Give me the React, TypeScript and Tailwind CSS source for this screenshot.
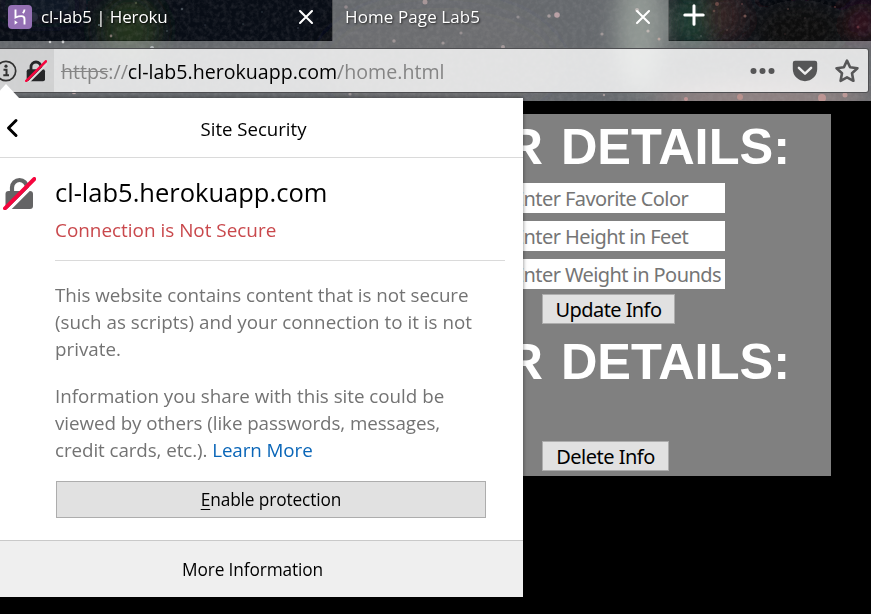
import React from "react";

const STARS: [number, number, number, string][] = [
  [33, 17, 5, "#303448"], [50, 42, 1.3, "#ffffff"], [63, 42, 1.4, "#ffffff"], [99, 25, 1, "#8aa0a8"],
  [111, 36, 1.4, "#b09a98"], [108, 17, 0.9, "#59604f"], [136, 3, 1.2, "#5c664b"], [182, 9, 1.3, "#65707a"],
  [167, 31, 0.8, "#7a8690"], [205, 25, 0.7, "#4b5560"], [74, 92, 2.2, "#e6c9c4"], [152, 48, 2, "#d9dde0"],
  [243, 24, 0.7, "#55606a"], [262, 12, 0.8, "#4f5862"], [298, 28, 1, "#3c4450"], [425, 2, 2.5, "#c7adad"],
  [346, 7, 1.8, "#a99a9d"], [394, 41, 1.7, "#b9a9a9"], [443, 43, 1.6, "#b5a9a9"], [461, 33, 1.6, "#aaa0a2"],
  [518, 17, 1.6, "#a8a0a2"], [549, 16, 1.8, "#c4b4b4"], [557, 15, 2.8, "#e2bcc0"], [503, 47, 2, "#c2b0b0"],
  [602, 34, 1.6, "#b9aaa9"], [350, 94, 1.6, "#b7a9a9"], [637, 10, 2, "#d8cdca"], [648, 31, 1.6, "#d9c9c4"],
  [717, 4, 2, "#8a5d57"], [714, 11, 1.3, "#755450"], [745, 16, 1.6, "#9a7068"],
  [742, 4, 1, "#6b4b47"], [788, 9, 1, "#604643"], [805, 18, 0.8, "#553f3f"], [835, 7, 1, "#71484c"],
  [858, 27, 1.5, "#7c444d"], [785, 34, 0.8, "#513c3c"], [727, 30, 1, "#5e4743"], [701, 36, 1, "#53615a"],
  [659, 39, 1.5, "#d6b7ae"], [686, 99, 2, "#dd9f9f"], [740, 97, 3, "#d09a94"], [822, 98, 4, "#d8a19e"],
  [845, 95, 2.5, "#d8a8a4"], [604, 95, 1.2, "#c6b2b0"],
];

function Starfield() {
  return (
    <svg className="absolute inset-0" width="871" height="101" viewBox="0 0 871 101" aria-hidden="true">
      <defs>
        <filter id="grain" x="0" y="0" width="100%" height="100%">
          <feTurbulence type="fractalNoise" baseFrequency="0.22" numOctaves="3" seed="4" />
          <feColorMatrix values="0 0 0 0 .55  0 0 0 0 .5  0 0 0 0 .5  1.2 0 0 0 -.46" />
        </filter>
        <filter id="soft" x="-50%" y="-50%" width="200%" height="200%"><feGaussianBlur stdDeviation="11" /></filter>
        <filter id="dot" x="-50%" y="-50%" width="200%" height="200%"><feGaussianBlur stdDeviation=".7" /></filter>
      </defs>
      <rect width="871" height="101" fill="#080d16" />
      <g filter="url(#soft)">
        <ellipse cx="130" cy="30" rx="30" ry="34" fill="#24301f" />
        <ellipse cx="40" cy="5" rx="50" ry="12" fill="#131b2a" />
        <ellipse cx="440" cy="60" rx="120" ry="60" fill="#12141a" />
        <ellipse cx="640" cy="30" rx="24" ry="60" fill="#66736a" />
        <ellipse cx="693" cy="20" rx="22" ry="30" fill="#1d3d32" />
        <ellipse cx="725" cy="15" rx="20" ry="30" fill="#302420" />
        <ellipse cx="800" cy="30" rx="50" ry="30" fill="#100c0d" />
        <ellipse cx="864" cy="22" rx="10" ry="20" fill="#4a1524" />
        <ellipse cx="760" cy="98" rx="110" ry="16" fill="#6c4949" />
      </g>
      <rect width="871" height="101" filter="url(#grain)" opacity=".22" />
      <path d="M332 0H669V41H871V101H0V41H332Z" fill="#b4b6b7" fillOpacity=".55" />
      <path d="M0 40.5H332.500V0M668.500 0V40.500H871" fill="none" stroke="#000" strokeOpacity=".25" />
      <g filter="url(#dot)">
        {STARS.map(([x, y, r, fill], i) => <circle key={i} cx={x} cy={y} r={r} fill={fill} opacity=".65" />)}
      </g>
    </svg>
  );
}

function Cross() {
  return (
    <svg width="16" height="16" viewBox="0 0 16 16" fill="none" stroke="#fff" strokeWidth="2.1" strokeLinecap="round" aria-hidden="true">
      <path d="M2 2L14 14M14 2L2 14" />
    </svg>
  );
}

function BrokenLock({ size, body, gap }: { size: number; body: string; gap: string }) {
  return (
    <svg width={size} height={size} viewBox="0 0 33 33" fill="none" aria-hidden="true">
      <path d="M9 15V10.500a7.500 7.500 0 0 1 15 0V15" stroke={body} strokeWidth="4.2" />
      <rect x="2.500" y="14" width="27.500" height="18" rx="3" fill={body} />
      <path d="M4.500 34L35 3.500" stroke={gap} strokeWidth="3.200" />
      <path d="M2 31.300L31.300 2" stroke="#f5063e" strokeWidth="3.900" strokeLinecap="round" />
    </svg>
  );
}

function Chrome() {
  return (
    <header className="relative h-[101px] overflow-hidden">
      <Starfield />
      <div className="relative flex h-[41px] text-[17px] text-white">
        <div className="flex h-[34px] w-[332px] items-center pl-2">
          <svg width="24" height="24" viewBox="0 0 24 24" fill="none" aria-hidden="true">
            <rect width="24" height="24" rx="4" fill="#9470b4" />
            <path d="M7.500 4.500v8c2-.9 4-1.400 6-1.400 2.200 0 3 .9 3 2.800v5.600M16.500 4.500c-.1 1.500-.7 2.700-1.700 3.700" stroke="#fff" strokeWidth="1.900" />
            <path d="M6.600 15.200l3.100 2.300-3.100 2.300z" fill="#fff" />
          </svg>
          <span className="ml-[9px] w-[257px] tracking-[-0.12px] [text-shadow:1px_1px_2px_#000]">cl-lab5 | Heroku</span>
          <Cross />
        </div>
        <div className="flex h-[34px] w-[337px] items-center pl-[13px]">
          <span className="w-[290px] tracking-[0.1px] [text-shadow:1px_1px_2px_#222]">Home Page Lab5</span>
          <Cross />
        </div>
        <svg className="ml-[14px] mt-[4px]" width="22" height="22" viewBox="0 0 22 22" stroke="#fff" strokeWidth="3" strokeLinecap="round" aria-hidden="true">
          <path d="M11 1.800V20.200M1.800 11H20.200" />
        </svg>
      </div>
      <div className="relative mt-[7px] flex h-[45px] w-[869px] items-center overflow-hidden rounded-r-[3px] border border-l-0 border-[#4f4f52] bg-white/80">
        <div className="flex h-full w-[54px] items-center bg-black/[.07]">
          <svg className="ml-[-5px]" width="22" height="22" viewBox="0 0 22 22" fill="none" stroke="#333" aria-hidden="true">
            <circle cx="11" cy="11" r="9.700" strokeWidth="1.700" />
            <path d="M8.500 9.700H11.500V15M8.300 15.200H14" strokeWidth="2" />
            <circle cx="11" cy="6.200" r="1.600" fill="#333" stroke="none" />
          </svg>
          <div className="ml-[8px]"><BrokenLock size={22} body="#262628" gap="#dcdcdc" /></div>
        </div>
        <div className="ml-[7px] flex w-[689px] whitespace-pre pt-[2px] text-[19.600px] text-[#858585]">
          <span className="line-through">https</span>
          <span>://</span>
          <span className="text-black">cl-lab5.herokuapp.com</span>
          <span>/home.html</span>
        </div>
        <svg width="25" height="8" viewBox="0 0 25 8" fill="#565657" aria-hidden="true">
          <circle cx="3.500" cy="4" r="3" /><circle cx="12.500" cy="4" r="3" /><circle cx="21.500" cy="4" r="3" />
        </svg>
        <svg className="ml-[17px]" width="26" height="22" viewBox="0 0 26 22" fill="none" aria-hidden="true">
          <path d="M3 .7H23a2.200 2.200 0 0 1 2.200 2.200V9a12.200 12.200 0 0 1-24.400 0V2.900A2.200 2.200 0 0 1 3 .7z" fill="#565657" />
          <path d="M6.900 7.900L13 13.700l6.100-5.800" stroke="#eee" strokeWidth="2.500" strokeLinecap="round" strokeLinejoin="round" />
        </svg>
        <svg className="ml-[17px]" width="24" height="24" viewBox="0 0 24 24" fill="none" stroke="#565657" strokeWidth="2.600" strokeLinejoin="round" aria-hidden="true">
          <path d="M12 1.600l3.100 6.700 7.300.9-5.400 5 1.400 7.600L12 18.300l-6.400 3.500L7 14.200l-5.400-5 7.300-.9z" />
        </svg>
      </div>
    </header>
  );
}

function Field({ label }: { label: string }) {
  return (
    <div className="flex h-[30px] w-[225px] items-center bg-white pl-[13px] pt-[2px] text-[20px] tracking-[-0.58px] text-[#757575]">
      <span className="whitespace-nowrap">{label}</span>
    </div>
  );
}

function PageContent() {
  return (
    <main className="mt-[13px] flex h-[362px] w-[831px] flex-col items-start bg-[#808080] pl-[500px] font-['Noto_Sans',sans-serif]">
      <h1 className="flex h-[65px] w-[290px] items-center justify-end whitespace-nowrap font-['Liberation_Sans',Arial,sans-serif] text-[50.500px] font-bold [word-spacing:4px] text-white">R DETAILS:</h1>
      <div className="mt-1 flex flex-col gap-2">
        <Field label="Enter Favorite Color" />
        <Field label="Enter Height in Feet" />
        <Field label="Enter Weight in Pounds" />
      </div>
      <button className="ml-[42px] mt-[5px] h-[30px] w-[133px] whitespace-nowrap border border-[#adadad] bg-[#e1e1e1] pt-px text-[20px] leading-[28px] tracking-[-0.58px] text-black">Update Info</button>
      <h1 className="flex h-[75px] w-[290px] items-center justify-end whitespace-nowrap font-['Liberation_Sans',Arial,sans-serif] text-[50.500px] font-bold [word-spacing:4px] text-white">R DETAILS:</h1>
      <button className="ml-[42px] mt-[42px] h-[30px] w-[127px] whitespace-nowrap border border-[#adadad] bg-[#e1e1e1] pt-px text-[20px] leading-[28px] tracking-[-0.5px] text-black">Delete Info</button>
    </main>
  );
}

function SecurityPopup() {
  return (
    <section className="absolute left-0 top-[98px] flex h-[499px] w-[523px] flex-col bg-white text-[18.800px] leading-[27px] text-black shadow-[0_0_4px_rgba(0,0,0,.5)]">
      <svg className="absolute left-[-8px] top-[-14px]" width="28" height="15" viewBox="0 0 28 15" aria-hidden="true">
        <path d="M0 15L14 0L28 15z" fill="#fff" />
      </svg>
      <div className="flex h-[60px] items-center border-b border-[#dadada]">
        <svg className="ml-[5px]" width="14" height="20" viewBox="0 0 14 20" fill="none" stroke="#000" strokeWidth="3" strokeLinecap="round" strokeLinejoin="round" aria-hidden="true">
          <path d="M11 2.500L3.500 10L11 17.500" />
        </svg>
        <h2 className="w-[469px] pt-[2px] text-center text-[18.600px]">Site Security</h2>
      </div>
      <div className="flex h-[382px]">
        <div className="w-[55px] pl-[3px] pt-[19px]"><BrokenLock size={33} body="#646465" gap="#ffffff" /></div>
        <div className="w-[450px]">
          <h3 className="mt-[17px] whitespace-nowrap text-[25.500px] leading-[34px]">cl-lab5.herokuapp.com</h3>
          <p className="mt-[8px] text-[18.900px] text-[#c9484c]">Connection is Not Secure</p>
          <hr className="mt-[16px] border-[#dadada]" />
          <p className="mt-[21px] whitespace-nowrap text-[#737373]">
            <span className="tracking-[-0.04px]">This website contains content that is not secure</span><br />
            <span className="tracking-[0.02px]">(such as scripts) and your connection to it is not</span><br />
            private.
          </p>
          <p className="mt-[20px] whitespace-nowrap text-[#737373]">
            <span className="tracking-[-0.02px]">Information you share with this site could be</span><br />
            <span className="tracking-[-0.07px]">viewed by others (like passwords, messages,</span><br />
            <span className="tracking-[-0.08px]">credit cards, etc.). <a className="text-[#0a66b8]">Learn More</a></span>
          </p>
          <button className="ml-px mt-[17px] h-[37px] w-[430px] border border-[#adadad] bg-[#e1e1e1] text-[17.300px] leading-[34px] tracking-[-0.12px]">
            <span className="underline underline-offset-[3px]">E</span>nable protection
          </button>
        </div>
      </div>
      <footer className="flex h-[57px] items-center border-t border-[#c9c9c9] bg-[#efefef] pl-[182px] text-[17.300px] tracking-[-0.12px]">More Information</footer>
    </section>
  );
}

export default function App() {
  return (
    <div className="relative h-[614px] w-[871px] overflow-hidden bg-black font-['Open_Sans','Noto_Sans',sans-serif]">
      <Chrome />
      <PageContent />
      <SecurityPopup />
    </div>
  );
}
